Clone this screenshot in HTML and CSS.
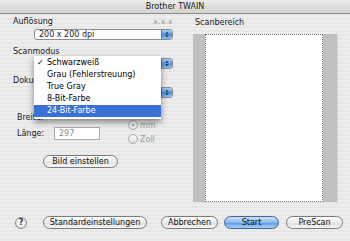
FILE: index.html
```html
<!DOCTYPE html>
<html>
<head>
<meta charset="utf-8">
<link rel="stylesheet" href="styles.css">
</head>
<body>
<div class="window">
  <div class="titlebar">Brother TWAIN</div>
  <div class="content">
    <div class="left">
      <div class="labelrow"><span>Auflösung</span><span class="ver">x.x.x</span></div>
      <div class="popup"><span class="ptext">200 x 200 dpi</span><span class="stepper"><svg width="11" height="11" viewBox="0 0 11 11"><path d="M5.5 2 L7.5 4.5 L3.5 4.5 Z M5.5 9 L7.5 6.5 L3.5 6.5 Z" fill="#1b2f55"/></svg></span></div>
      <div class="label">Scanmodus</div>
      <div class="popup"><span class="ptext">24-Bit-Farbe</span><span class="stepper"><svg width="11" height="11" viewBox="0 0 11 11"><path d="M5.5 2 L7.5 4.5 L3.5 4.5 Z M5.5 9 L7.5 6.5 L3.5 6.5 Z" fill="#1b2f55"/></svg></span></div>
      <div class="label">Dokumentengröße</div>
      <div class="popup"><span class="ptext faded">A4</span><span class="stepper"><svg width="11" height="11" viewBox="0 0 11 11"><path d="M5.5 2 L7.5 4.5 L3.5 4.5 Z M5.5 9 L7.5 6.5 L3.5 6.5 Z" fill="#1b2f55"/></svg></span></div>
      <div class="sizes">
        <div class="fields">
          <div class="frow"><span class="flabel">Breite:</span></div>
          <div class="frow"><span class="flabel">Länge:</span><span class="input">297</span></div>
        </div>
        <div class="radios">
          <div class="radio"><span class="dot on"></span><span>mm</span></div>
          <div class="radio"><span class="dot"></span><span>Zoll</span></div>
        </div>
      </div>
      <div class="btn bild">Bild einstellen</div>
    </div>
    <div class="right">
      <div class="label rlabel">Scanbereich</div>
      <div class="scanarea"><div class="page"></div></div>
    </div>
  </div>
  <div class="bottombar">
    <div class="help">?</div>
    <div class="btn std">Standardeinstellungen</div>
    <div class="btn abb">Abbrechen</div>
    <div class="btn start">Start</div>
    <div class="btn pre">PreScan</div>
  </div>
  <div class="menu">
    <div class="item"><span class="check">✓</span>Schwarzweiß</div>
    <div class="item"><span class="check"></span>Grau (Fehlerstreuung)</div>
    <div class="item"><span class="check"></span>True Gray</div>
    <div class="item"><span class="check"></span>8-Bit-Farbe</div>
    <div class="item sel"><span class="check"></span>24-Bit-Farbe</div>
  </div>
</div>
</body>
</html>
```

FILE: styles.css
```css
* { box-sizing: border-box; }
html, body { margin: 0; padding: 0; }
body {
  width: 350px;
  height: 241px;
  overflow: hidden;
  font-family: "DejaVu Sans", sans-serif;
  font-size: 8px;
  color: #1a1a1a;
  background: repeating-linear-gradient(#ededed 0px, #ededed 2px, #e7e7e7 2px, #e7e7e7 4px);
}
.window {
  position: relative;
  width: 350px;
  height: 241px;
  display: flex;
  flex-direction: column;
}
.titlebar {
  height: 14px;
  line-height: 13px;
  text-align: center;
  color: #222;
  background: linear-gradient(#ececec, #d2d2d2);
  border-bottom: 1px solid #8e8e8e;
}
.content {
  display: flex;
}
.left {
  width: 173px;
  padding-left: 13px;
  display: flex;
  flex-direction: column;
}
.labelrow {
  margin-top: 3px;
  height: 10px;
  line-height: 10px;
  display: flex;
  justify-content: space-between;
}
.ver { color: #8a8a8a; font-size: 7px; letter-spacing: 0.5px; }
.label { height: 10px; line-height: 10px; margin-top: 7px; }
.popup {
  margin-top: 2px;
  margin-left: 21px;
  width: 139px;
  height: 11px;
  display: flex;
  background: #fff;
  border: 1px solid #8c8c8c;
  border-radius: 3px;
  overflow: hidden;
}
.popup + .label { margin-top: 7px; }
.label + .popup { margin-top: 1px; }
.popup:nth-of-type(3) { margin-top: 4px; }
.ptext { flex: 1; padding-left: 4px; line-height: 9px; }
.faded { color: #bbb; }
.stepper {
  width: 11px;
  height: 9px;
  background: linear-gradient(#a6cbf3, #5f9be0 50%, #4a8adb 50%, #8cc0f2);
  border-left: 1px solid #5577aa;
  display: flex;
}
.stepper svg { width: 10px; height: 9px; }
.sizes {
  margin-top: 13px;
  display: flex;
  height: 34px;
}
.fields { display: flex; flex-direction: column; gap: 3px; }
.frow { height: 13px; display: flex; align-items: center; }
.flabel { width: 41px; padding-left: 4px; }
.input {
  width: 46px;
  height: 13px;
  line-height: 11px;
  padding-left: 4px;
  background: #fff;
  border: 1px solid #a8a8a8;
  color: #8a8a8a;
}
.radios {
  margin-left: 28px;
  margin-top: 8px;
  display: flex;
  flex-direction: column;
  gap: 2px;
  color: #999;
}
.radio { height: 12px; display: flex; align-items: center; gap: 2px; }
.dot {
  width: 10px;
  height: 10px;
  border-radius: 50%;
  border: 1px solid #aaa;
  background: linear-gradient(#fafafa, #e2e2e2);
  position: relative;
}
.dot.on::after {
  content: "";
  position: absolute;
  left: 3px;
  top: 3px;
  width: 2px;
  height: 2px;
  border-radius: 50%;
  background: #888;
}
.btn {
  height: 13px;
  line-height: 11px;
  text-align: center;
  border: 1px solid #7a7a7a;
  border-radius: 7px;
  background: linear-gradient(#fdfdfd, #ececec 50%, #dedede 50%, #f6f6f6);
  color: #111;
}
.bild { margin-top: 10px; margin-left: 30px; width: 75px; }
.right {
  margin-left: 20px;
  width: 145px;
  display: flex;
  flex-direction: column;
}
.rlabel { margin-top: 4px; padding-left: 2px; }
.scanarea {
  margin-top: 6px;
  height: 168px;
  background: #bfbfbf;
  border-right: 1px solid #d8d8d8;
  display: flex;
  padding: 0 14px 0 12px;
}
.page {
  flex: 1;
  background: #fff;
  border: 1px dotted #777;
}
.bottombar {
  margin-top: auto;
  margin-bottom: 12px;
  padding-left: 15px;
  display: flex;
  align-items: center;
  height: 13px;
}
.help {
  width: 12px;
  height: 12px;
  border-radius: 50%;
  border: 1px solid #888;
  background: radial-gradient(circle at 50% 35%, #fff, #d6d6d6);
  text-align: center;
  line-height: 10px;
  font-weight: bold;
  font-size: 8px;
  color: #333;
}
.std { margin-left: 16px; width: 104px; }
.abb { margin-left: 14px; width: 57px; }
.start {
  margin-left: 6px;
  width: 55px;
  border-color: #3e629c;
  background: linear-gradient(#cfe3fa, #86b6ec 50%, #5c96e0 50%, #a9d1f8);
}
.pre { margin-left: 7px; width: 57px; }
.menu {
  position: absolute;
  left: 34px;
  top: 56px;
  width: 127px;
  height: 63px;
  padding: 1px 0 2px;
  background: rgba(255, 255, 255, 0.97);
  box-shadow: 0 3px 6px rgba(0, 0, 0, 0.45);
}
.item { height: 12px; line-height: 12px; padding-left: 3px; display: flex; color: #000; }
.check { width: 10px; }
.item.sel { background: #3a71d2; color: #fff; }
```
